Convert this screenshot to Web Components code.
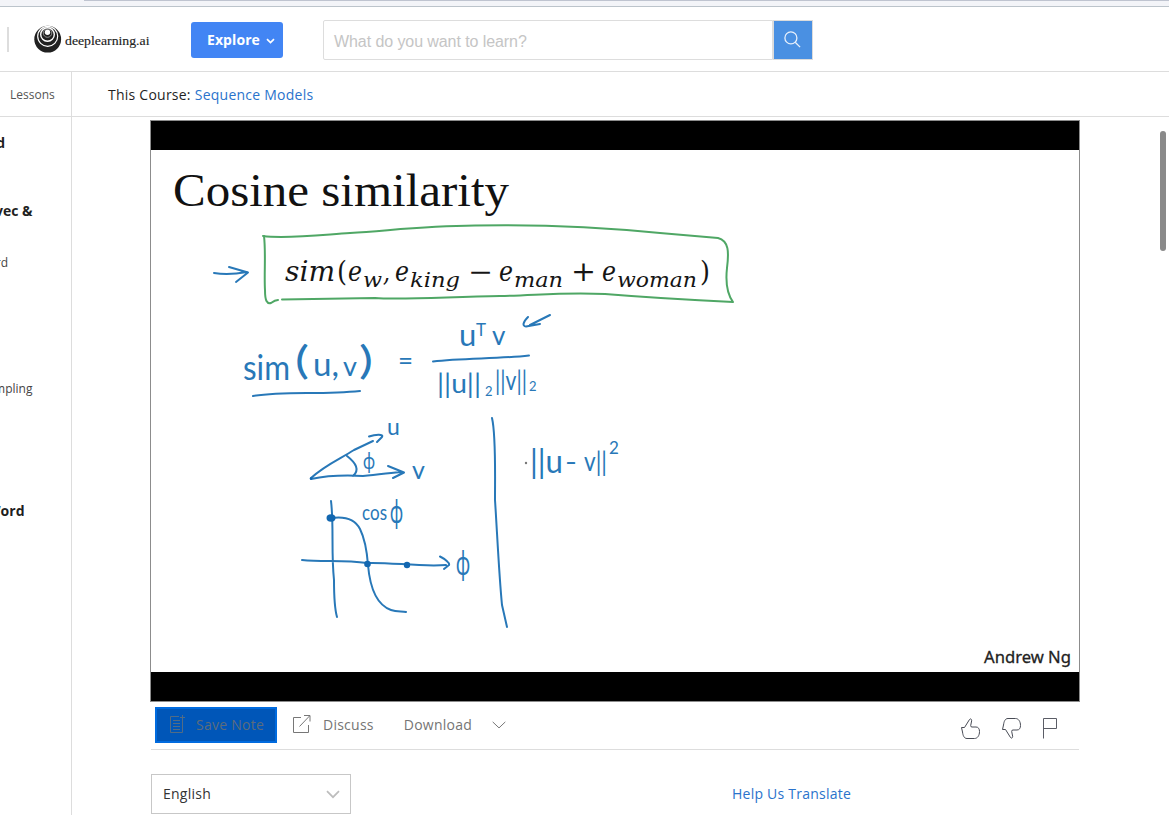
<!DOCTYPE html>
<html lang="en"><head><meta charset="utf-8"><title>Sequence Models</title>
<style>html,body{margin:0;height:100%;overflow:hidden;background:#fff}body{font-family:"Open Sans","Noto Sans",sans-serif;font-size:14px;color:#1f1f1f}</style></head>
<body><course-page></course-page>
<script>
const def=(name,html)=>customElements.define(name,class extends HTMLElement{constructor(){super();const t=document.createElement('template');t.innerHTML='<style>*{box-sizing:border-box}svg{display:block}</style>'+html;this.attachShadow({mode:'open'}).append(t.content.cloneNode(true));}});

def('brand-logo',`<style>:host{display:flex;align-items:center;gap:3px;white-space:nowrap}</style>
<svg width="28" height="28" viewBox="0 0 28 28"><circle cx="13.7" cy="14.2" r="13.4" fill="#202020"/><g fill="none" stroke="#fff"><circle cx="13.700" cy="11.300" r="10" stroke-width="1.200"/><circle cx="13.500" cy="9.500" r="6.800" stroke-width="1.400"/><circle cx="13.500" cy="8" r="4.300" stroke-width=".7" stroke="#bbb"/></g><circle cx="13.500" cy="7.200" r="2.700" fill="#fff"/></svg>
<svg width="86" height="22" viewBox="0 0 86 22"><text x="0" y="17" font-family="Liberation Serif" font-size="13.5" fill="#222" stroke="#222" stroke-width=".15" textLength="84.500" lengthAdjust="spacingAndGlyphs">deeplearning.ai</text></svg>`);

def('explore-button',`<style>:host{display:flex;align-items:center;width:92px;height:36px;background:#4285f4;border-radius:3px;color:#fff;font-weight:700;padding:0 0 1px 16px;box-sizing:border-box;gap:6px;letter-spacing:.08px}svg{margin-top:3px}</style>
<slot></slot><svg width="9" height="6" viewBox="0 0 9 6"><path d="M1 1.200 4.500 4.600 8 1.200" fill="none" stroke="#fff" stroke-width="1.700"/></svg>`);

def('search-box',`<style>:host{display:flex;width:490px;height:40px}.f{width:450px;border:1px solid #ddd;border-radius:2px 0 0 2px;padding:3px 0 0 10px;display:flex;align-items:center;font:16px "Liberation Sans",sans-serif;letter-spacing:-.08px;color:#c5c5c5}.b{width:40px;background:#4a90e2;border:1px solid #dcdcdc;display:grid;place-items:center}.b svg{margin:-1px 2px 0 0}</style>
<div class="f"><slot></slot></div><div class="b"><svg width="17" height="17" viewBox="0 0 17 17" fill="none" stroke="#e8f0fb" stroke-width="1.3"><circle cx="6.9" cy="6.9" r="6"/><path d="m11.2 11.2 4.9 4.9"/></svg></div>`);

def('top-header',`<style>:host{display:block}.strip{height:7px;background:#f3f4f8;border-bottom:1px solid #bcc4cb}.strip i{display:block;margin-left:84px;height:1px;background:#bfc4d0}.bar{display:flex;align-items:flex-start;height:65px;border-bottom:1px solid #ddd}.div{width:2px;height:25px;background:#ddd;margin:20px 25px 0 7px}brand-logo{width:119px;margin-top:18px}explore-button{margin:15px 0 0 38px}search-box{margin:13px 0 0 40px}</style>
<div class="strip"><i></i></div><div class="bar"><div class="div"></div><brand-logo></brand-logo><explore-button>Explore</explore-button><search-box>What do you want to learn?</search-box></div>`);

def('side-item',`<style>:host{display:flex;justify-content:flex-end;height:20px;line-height:20px;overflow:hidden;white-space:nowrap;font-size:12px;color:#444}:host([strong]){font-size:14px;font-weight:700;color:#1f1f1f}</style><slot></slot>`);

def('side-bar',`<style>:host{display:block;border-right:1px solid #ddd;box-sizing:border-box}.h{height:45px;line-height:45px;padding-left:10px;font-size:12px;color:#555;border-bottom:1px solid #ddd}</style>
<div class="h">Lessons</div>
<side-item strong style="width:5px;margin-top:16px">d</side-item>
<side-item strong style="width:32.5px;margin-top:48px">vec &amp;</side-item>
<side-item style="width:8px;margin-top:32px">rd</side-item>
<side-item style="width:32.5px;margin-top:106px">mpling</side-item>
<side-item strong style="width:24.5px;margin-top:102px">Word</side-item>`);

def('course-crumb',`<style>:host{display:flex;gap:4px;align-items:center;height:45px;border-bottom:1px solid #ddd;padding-left:36px;box-sizing:border-box;letter-spacing:.24px}a{color:#2a73cc}</style><span>This Course:</span><a><slot></slot></a>`);

def('lecture-slide',`<style>:host{display:block;width:930px;height:582px}
.ink{fill:none;stroke:#2878b8;stroke-width:2;stroke-linecap:round;stroke-linejoin:round}.hand{fill:#2878b8;font-family:Lato,sans-serif}.math{font-family:"DejaVu Serif",serif;font-style:italic;fill:#151515}.dot{fill:#1267b0}</style>
<svg width="930" height="582" viewBox="150 120 930 582">
<rect x="150.5" y="120.5" width="929" height="581" fill="#fff" stroke="#8c8c8c"/>
<path d="M151 121h928v29H151zM151 672h928v29H151z"/>
<text x="173" y="205.500" font-family="Liberation Serif" font-size="47" fill="#111" textLength="336" lengthAdjust="spacingAndGlyphs">Cosine similarity</text>
<g class="math" font-size="27">
<text x="285" y="281" textLength="50" lengthAdjust="spacingAndGlyphs">sim</text><text x="337" y="281" font-style="normal" textLength="10" lengthAdjust="spacingAndGlyphs">(</text>
<text x="348" y="281" textLength="14" lengthAdjust="spacingAndGlyphs">e</text><text x="363" y="287" font-size="21" textLength="19" lengthAdjust="spacingAndGlyphs">w</text><text x="383" y="281" textLength="7" lengthAdjust="spacingAndGlyphs">,</text>
<text x="395" y="281" textLength="14" lengthAdjust="spacingAndGlyphs">e</text><text x="410" y="287" font-size="21" textLength="50" lengthAdjust="spacingAndGlyphs">king</text>
<text x="468" y="281" textLength="25" lengthAdjust="spacingAndGlyphs">−</text>
<text x="499" y="281" textLength="14" lengthAdjust="spacingAndGlyphs">e</text><text x="514" y="287" font-size="21" textLength="49" lengthAdjust="spacingAndGlyphs">man</text>
<text x="571" y="281" font-style="normal" textLength="25" lengthAdjust="spacingAndGlyphs">+</text>
<text x="602" y="281" textLength="14" lengthAdjust="spacingAndGlyphs">e</text><text x="617" y="287" font-size="21" textLength="80" lengthAdjust="spacingAndGlyphs">woman</text>
<text x="700" y="281" font-style="normal" textLength="10" lengthAdjust="spacingAndGlyphs">)</text></g>
<g fill="none" stroke="#4fa765" stroke-width="2" stroke-linecap="round" stroke-linejoin="round">
<path d="M263 236C286 239 320 235 350 233C395 230 425 226 475 225.5C550 224 610 228 660 233L718 238C729 241 729 252 727 268C725 286 728 295 733 302C690 300 642 297 605 294C565 292 540 295 500 296C445 297 400 300 375 298L282 299.500"/><path d="M264 236C266 253 264 275 265 290C265 301 267 304 271 303C275 300 277 300 278 300"/></g>
<g class="ink">
<path d="M214 273C226 275 236 274 247 272M229 267L248 272.500 236 282"/>
<path d="M253 396C285 391 320 395 360 391M433 361.500C463 358 500 359 529 355.500M550 315L530 325M528 317C523 322 522 326 526 326.500L540 324"/>
<path d="M492 418C496 435 495 470 495 500C497 530 499 575 502 605L507 627"/>
<path d="M311 478C325 465 340 459 354 450L373 441M369 436.500C376 434 384 434 382 437L377 442M311 479C330 475 345 475 363 476C380 475 393 472 402 472M388 466L404 472.500 393 478M347 456C356 463 360 470 353 476"/>
<path d="M331 501C334 525 331 552 334 580C334 597 335 610 337 617M302 560C323 562 343 560 367 563C390 562 420 567 446 565M440 556.500C445 559 450 563 449 565L444 569M331 518C345 516 355 519 360 529C365 539 367 552 368 565C370 588 377 605 391 610C397 612 402 611 406 612"/>
</g>
<g class="dot"><ellipse cx="331" cy="518" rx="4.500" ry="3.700"/><circle cx="367.500" cy="564" r="3.300"/><circle cx="407" cy="565" r="3.200"/><circle cx="311" cy="478.500" r="1.300"/><circle cx="526" cy="463" r="1.200" fill="#777"/></g>
<g class="hand">
<text x="243" y="380" font-size="34" textLength="47" lengthAdjust="spacingAndGlyphs">sim</text>
<text x="295" y="374" font-size="38" textLength="14" lengthAdjust="spacingAndGlyphs">(</text>
<text x="313" y="376" font-size="33" textLength="26" lengthAdjust="spacingAndGlyphs">u,</text>
<text x="343" y="376" font-size="27">v</text><text x="359" y="374" font-size="38" textLength="14" lengthAdjust="spacingAndGlyphs">)</text>
<text x="398" y="370" font-size="26">=</text>
<text x="459" y="346" font-size="31">u</text><text x="476" y="336" font-size="17">T</text><text x="492" y="345" font-size="26">v</text>
<text x="437" y="393" font-size="26" textLength="44" lengthAdjust="spacingAndGlyphs">||u||</text><text x="485" y="396" font-size="13">2</text>
<text x="495" y="390" font-size="26" textLength="32" lengthAdjust="spacingAndGlyphs">||v||</text><text x="529" y="391" font-size="13">2</text>
<text x="387" y="435" font-size="23">u</text><text x="412" y="479" font-size="25">v</text>
<text x="363" y="469" font-size="23" textLength="12" lengthAdjust="spacingAndGlyphs">ϕ</text>
<text x="362" y="520" font-size="22" textLength="25" lengthAdjust="spacingAndGlyphs">cos</text><text x="390" y="523" font-size="32" textLength="13" lengthAdjust="spacingAndGlyphs">ϕ</text>
<text x="456" y="575" font-size="34" textLength="14" lengthAdjust="spacingAndGlyphs">ϕ</text>
<text x="530" y="473" font-size="32" textLength="33" lengthAdjust="spacingAndGlyphs">||u</text><text x="565" y="471" font-size="25" textLength="12" lengthAdjust="spacingAndGlyphs">-</text><text x="584" y="471" font-size="27" textLength="23" lengthAdjust="spacingAndGlyphs">v||</text><text x="609" y="454" font-size="17">2</text>
</g>
<text x="984" y="663" font-family="Noto Sans" font-size="17" fill="#222" stroke="#222" stroke-width=".3" textLength="87" lengthAdjust="spacingAndGlyphs">Andrew Ng</text>
</svg>`);

def('video-actions',`<style>:host{display:flex;align-items:flex-start;height:48px;border-bottom:1px solid #ddd;width:928px;margin-left:1px;padding-top:5px;box-sizing:border-box;color:#757575;letter-spacing:.25px}
div{display:flex;align-items:center;height:36px}span{white-space:nowrap;margin-top:-2px}.save{width:122px;margin-left:4px;background:#0056b8;border:2px solid #006bdf;color:#5c6c7c;padding-left:13px;gap:11px}.save svg,.disc svg{margin-top:-2px}.disc{margin-left:16px;gap:12px}.down{margin-left:30px;gap:20px}.rate{margin:3px 20px 0 auto;gap:20px}</style>
<div class="save"><svg width="15" height="18" viewBox="0 0 15 18" fill="none" stroke="#526c85"><path d="M9 1.500H.5v16h12V5M12.500 0v5M10 2.500h5M3 5.500h7M3 8.500h7M3 11.500h7M3 14.500h7"/></svg><span>Save Note</span></div>
<div class="disc"><svg width="18" height="18" viewBox="0 0 18 18" fill="none" stroke="#777"><path d="M8 2.500H.5v15h15V10M6.500 11.500 16.500 1M11 .5h6v6"/></svg><span>Discuss</span></div>
<div class="down"><span>Download</span><svg width="14" height="8" viewBox="0 0 14 8"><path d="m.7.9 6.300 6 6.300-6" fill="none" stroke="#777"/></svg></div>
<div class="rate"><svg width="21" height="21" viewBox="0 0 21 21" fill="none" stroke="#484b55"><path d="M1.500 9.500H4.500L9.500 1.500C10.500 0 12 1.500 11.600 3L10.700 7.500Q10.500 9 12 9H16C18.500 9 19.500 11 19.500 13.500C19.500 17.500 17.500 20.500 14.500 20.500H7C4 20.500 3 17.500 2.500 14Z"/></svg>
<svg width="21" height="21" viewBox="0 0 21 21" fill="none" stroke="#484b55"><path transform="matrix(1 0 0 -1 0 21)" d="M1.500 9.500H4.500L9.500 1.500C10.500 0 12 1.500 11.600 3L10.700 7.500Q10.500 9 12 9H16C18.500 9 19.500 11 19.500 13.500C19.500 17.500 17.500 20.500 14.500 20.500H7C4 20.500 3 17.500 2.500 14Z"/></svg>
<svg width="17" height="21" viewBox="0 0 17 21" fill="none" stroke="#5b5d66"><path d="M1.500 20.500V.5h13v10h-13"/></svg></div>`);

def('language-row',`<style>:host{display:flex;align-items:center;height:40px;margin:24px 0 0 1px;letter-spacing:.24px}.s{width:200px;height:40px;border:1px solid #c7c7c7;display:flex;align-items:center;justify-content:space-between;padding:0 10px 2px 11px;color:#333}.s svg{margin-top:2px}a{margin:-2px 0 0 381px;color:#2a73cc}</style>
<div class="s"><slot></slot><svg width="14" height="9" viewBox="0 0 14 9"><path d="m1 1.200 6 6 6-6" fill="none" stroke="#bdbdbd" stroke-width="1.700"/></svg></div><a>Help Us Translate</a>`);

def('scroll-thumb',`<style>:host{position:absolute;left:1160px;top:131px;width:6px;height:120px;border-radius:3px;background:#8a8a8a}</style>`);

def('course-page',`<style>:host{display:block;height:815px}.body{display:grid;grid-template-columns:72px 1fr;height:743px}main{min-width:0}.video{padding:3px 0 0 78px}</style>
<top-header></top-header><div class="body"><side-bar></side-bar><main><course-crumb>Sequence Models</course-crumb><div class="video"><lecture-slide></lecture-slide><video-actions></video-actions><language-row>English</language-row></div></main></div><scroll-thumb></scroll-thumb>`);
</script></body></html>
